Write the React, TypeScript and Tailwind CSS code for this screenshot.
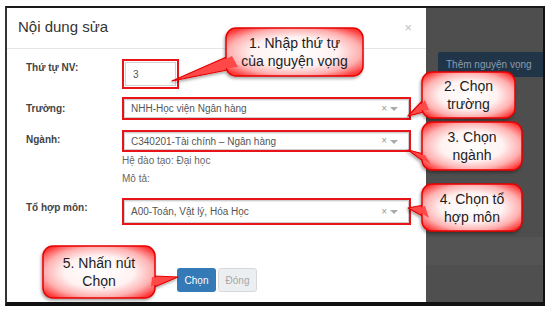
import React from "react";

type Callout = {
  x: number;
  y: number;
  w: number;
  h: number;
  tip: [number, number];
  b1: [number, number];
  b2: [number, number];
  lines: string[];
};

const callouts: Callout[] = [
  { x: 226, y: 28, w: 137, h: 48, tip: [172, 81], b1: [231, 55], b2: [237, 68], lines: ["1. Nhập thứ tự", "của nguyện vọng"] },
  { x: 422, y: 72, w: 93, h: 46, tip: [408, 116], b1: [424, 99], b2: [428, 111], lines: ["2. Chọn", "trường"] },
  { x: 422, y: 122, w: 100, h: 48, tip: [408, 150], b1: [424, 154], b2: [430, 166], lines: ["3. Chọn", "ngành"] },
  { x: 422, y: 184, w: 100, h: 47, tip: [408, 208], b1: [424, 205], b2: [428, 219], lines: ["4. Chọn tổ", "hợp môn"] },
  { x: 43, y: 246, w: 112, h: 52, tip: [178, 277], b1: [153, 276], b2: [152, 288], lines: ["5. Nhấn nút", "Chọn"] },
];

function SelectBox({ text, h }: { text: string; h: string }) {
  return (
    <div className={`w-[289px] border-2 border-[#e8141a] ${h} flex`}>
      <div className="flex-1 border border-[#cfcfcf] shadow-[inset_0_1px_1px_rgba(0,0,0,0.08)] flex items-center pl-[6px] pr-[10px]">
        <span className="flex-1 text-[10px] text-[#555]">{text}</span>
        <span className="text-[10px] text-[#999] mr-[3px] leading-none">×</span>
        <svg width="8" height="5" viewBox="0 0 8 5" className="mt-[2px]">
          <path d="M0 0 L8 0 L4 4 Z" fill="#aaa" />
        </svg>
      </div>
    </div>
  );
}

export default function App() {
  return (
    <div className="relative w-[549px] h-[311px] bg-white overflow-hidden font-['Liberation_Sans',Arial,sans-serif]">
      <div className="ml-[5px] mt-[6px] w-[540px] h-[300px] border-t-2 border-l-2 border-r-2 border-b-4 border-t-[#1a1a1a] border-l-[#333] border-r-[#111] border-b-[#111] flex">
        {/* Modal */}
        <div className="w-[419px] bg-white flex flex-col">
          <div className="h-[41px] border-b border-[#e5e5e5] flex items-center px-[11px]">
            <span className="flex-1 text-[15px] text-[#333] mt-[-2px]">Nội dung sửa</span>
            <span className="text-[13px] text-[#c0c0c0] mr-[3px]">×</span>
          </div>
          <div className="pl-[19px] flex flex-col">
            {/* Row 1 */}
            <div className="mt-[10px] flex items-start">
              <div className="w-[96px] mt-[3px] text-[10px] font-bold text-[#444] leading-[12px]">Thứ tự NV:</div>
              <div className="w-[57px] h-[30px] border-2 border-[#e8141a] p-px flex">
                <div className="flex-1 border border-[#d0d0d0] flex items-center pl-[7px] text-[10px] text-[#555]">3</div>
              </div>
            </div>
            {/* Row 2 */}
            <div className="mt-[8px] flex items-center">
              <div className="w-[96px] text-[10px] font-bold text-[#444] leading-[12px]">Trường:</div>
              <SelectBox text="NHH-Học viện Ngân hàng" h="h-[23px]" />
            </div>
            {/* Row 3 */}
            <div className="mt-[10px] flex items-start">
              <div className="w-[96px] mt-[4px] text-[10px] font-bold text-[#444] leading-[12px]">Ngành:</div>
              <div className="flex flex-col">
                <SelectBox text="C340201-Tài chính – Ngân hàng" h="h-[22px]" />
                <div className="text-[10px] text-[#666] leading-[18px] mt-0">Hệ đào tạo: Đại học</div>
                <div className="text-[10px] text-[#666] leading-[18px]">Mô tả:</div>
              </div>
            </div>
            {/* Row 4 */}
            <div className="mt-[10px] flex items-start">
              <div className="w-[96px] mt-[4px] text-[10px] font-bold text-[#444] leading-[12px]">Tổ hợp môn:</div>
              <SelectBox text="A00-Toán, Vật lý, Hóa Học" h="h-[27px]" />
            </div>
          </div>
          {/* Footer */}
          <div className="mt-[43px] pl-[170px] flex gap-[2px]">
            <button className="w-[39px] h-[24px] rounded-[3px] bg-[#337ab7] text-white text-[10px] flex items-center justify-center">Chọn</button>
            <button className="w-[39px] h-[24px] rounded-[3px] bg-[#eceff1] border border-[#d8d8d8] text-[#a6a6a6] text-[10px] flex items-center justify-center">Đóng</button>
          </div>
        </div>
        {/* Overlay */}
        <div className="flex-1 bg-[#4e4e4e] flex flex-col overflow-hidden">
          <div className="mt-[44px] ml-[12px] w-[120px] h-[25px] bg-[#213549] rounded-[2px] flex items-center pl-[8px] text-[10px] text-[#8b9bad] whitespace-nowrap">
            Thêm nguyện vọng
          </div>
          <div className="mt-[160px] h-[28px] bg-[#545454]" />
          <div className="flex-1 bg-[#4f4f4f]" />
        </div>
      </div>

      {/* Callout shapes */}
      <svg className="absolute left-0 top-0 pointer-events-none" width="549" height="311" viewBox="0 0 549 311">
        <defs>
          <radialGradient id="cg" cx="50%" cy="50%" r="62%">
            <stop offset="0" stopColor="#ffffff" />
            <stop offset="0.5" stopColor="#fff2f2" />
            <stop offset="0.78" stopColor="#ffb0b0" />
            <stop offset="0.95" stopColor="#ff5a5a" />
            <stop offset="1" stopColor="#ff3a3a" />
          </radialGradient>
          <filter id="sh" x="-20%" y="-20%" width="140%" height="150%">
            <feDropShadow dx="-1" dy="2" stdDeviation="1.5" floodColor="#000" floodOpacity="0.35" />
          </filter>
        </defs>
        {callouts.map((c, i) => (
          <g key={i} filter="url(#sh)">
            <polygon
              points={`${c.b1[0]},${c.b1[1]} ${c.tip[0]},${c.tip[1]} ${c.b2[0]},${c.b2[1]}`}
              fill="#ff4a4a"
              stroke="#e60000"
              strokeWidth="1.2"
              strokeLinejoin="round"
            />
            <rect x={c.x} y={c.y} width={c.w} height={c.h} rx="10" ry="10" fill="url(#cg)" stroke="#e60000" strokeWidth="1.5" />
            <polygon
              points={`${c.b1[0] + (c.b1[0] > c.tip[0] ? 1 : -1)},${c.b1[1] + 1} ${(c.b1[0] + c.tip[0]) / 2},${(c.b1[1] + c.b2[1]) / 2 * 0.5 + c.tip[1] * 0.5} ${c.b2[0] + (c.b2[0] > c.tip[0] ? 1 : -1)},${c.b2[1] - 1}`}
              fill="#ff4a4a"
            />
          </g>
        ))}
      </svg>

      {/* Callout texts */}
      {callouts.map((c, i) => (
        <div
          key={i}
          className="absolute flex flex-col items-center justify-center text-center text-[14px] leading-[18px] text-[#1c1c1c]"
          style={{ left: c.x, top: c.y, width: c.w, height: c.h }}
        >
          {c.lines.map((l, j) => (
            <div key={j}>{l}</div>
          ))}
        </div>
      ))}
    </div>
  );
}
